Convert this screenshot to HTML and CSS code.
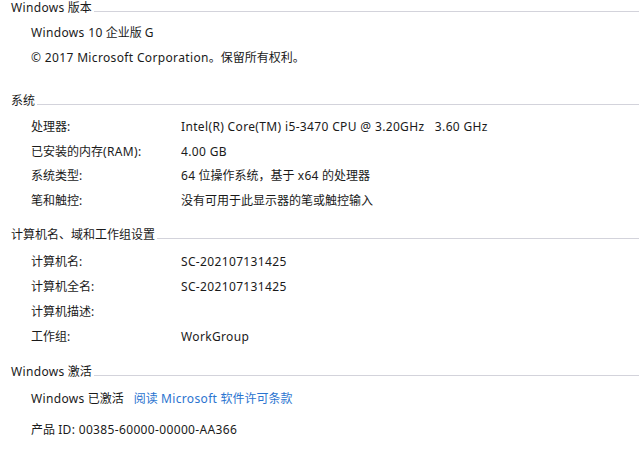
FILE: index.html
```html
<!DOCTYPE html>
<html lang="zh-CN">
<head>
<meta charset="utf-8">
<title>系统</title>
<link rel="stylesheet" href="styles.css">
</head>
<body>
<div class="page">
  <section class="sec sec-1">
    <div class="head"><span class="head-text"><span class="lat">Windows</span> 版本</span><span class="rule"></span></div>
    <div class="rows">
      <div class="row"><span class="full"><span class="lat">Windows 10</span> 企业版 <span class="lat">G</span></span></div>
      <div class="row"><span class="full"><span class="lat">© 2017 Microsoft Corporation</span>。保留所有权利。</span></div>
    </div>
  </section>

  <section class="sec sec-2">
    <div class="head"><span class="head-text">系统</span><span class="rule"></span></div>
    <div class="rows rows-tight">
      <div class="row"><span class="label">处理器:</span><span class="value lat">Intel(R) Core(TM) i5-3470 CPU @ 3.20GHz&nbsp;&nbsp;&nbsp;3.60 GHz</span></div>
      <div class="row"><span class="label">已安装的内存<span class="lat">(RAM):</span></span><span class="value lat">4.00 GB</span></div>
      <div class="row"><span class="label">系统类型:</span><span class="value"><span class="lat">64</span> 位操作系统，基于 <span class="lat">x64</span> 的处理器</span></div>
      <div class="row"><span class="label">笔和触控:</span><span class="value">没有可用于此显示器的笔或触控输入</span></div>
    </div>
  </section>

  <section class="sec sec-3">
    <div class="head"><span class="head-text">计算机名、域和工作组设置</span><span class="rule"></span></div>
    <div class="rows">
      <div class="row"><span class="label">计算机名:</span><span class="value lat">SC-202107131425</span></div>
      <div class="row"><span class="label">计算机全名:</span><span class="value lat">SC-202107131425</span></div>
      <div class="row"><span class="label">计算机描述:</span><span class="value"></span></div>
      <div class="row"><span class="label">工作组:</span><span class="value lat">WorkGroup</span></div>
    </div>
  </section>

  <section class="sec sec-4">
    <div class="head"><span class="head-text"><span class="lat">Windows</span> 激活</span><span class="rule"></span></div>
    <div class="rows">
      <div class="row"><span class="full"><span class="lat">Windows</span> 已激活</span><a class="link" href="#">阅读 <span class="lat">Microsoft</span> 软件许可条款</a></div>
      <div class="row row-gap"><span class="full">产品 <span class="lat">ID: 00385-60000-00000-AA366</span></span></div>
    </div>
  </section>
</div>
</body>
</html>
```

FILE: styles.css
```css
html, body {
  margin: 0;
  padding: 0;
  background: #ffffff;
}

body {
  font-family: "Segoe UI", "Noto Sans", "Noto Sans CJK SC", sans-serif;
  font-size: 12px;
  color: #1a1a1a;
}

.lat {
  letter-spacing: 0.35px;
}

.page {
  padding-left: 11px;
  width: 628px;
}

.head {
  display: flex;
  align-items: flex-start;
  height: 16px;
  line-height: 16px;
}

.head-text {
  white-space: nowrap;
  color: #1a1a1a;
}

.rule {
  flex: 1;
  height: 1px;
  margin-top: 11px;
  margin-left: 2px;
  background: #d3d3db;
}

.rows {
  padding-left: 20px;
  margin-top: 5.5px;
}

.row {
  display: flex;
  height: 25px;
  line-height: 25px;
  white-space: nowrap;
}

.rows-tight .row {
  height: 24.5px;
  line-height: 24.5px;
}

.label {
  width: 150px;
  flex: none;
}

.value {
  flex: none;
}

.link {
  margin-left: 10px;
  color: #2b74d0;
  text-decoration: none;
}

.row-gap {
  margin-top: 6px;
}

.sec-1 .rows { margin-top: 4px; }
.sec-2 { margin-top: 23px; }
.sec-2 .rows { margin-top: 6px; }
.sec-3 { margin-top: 14px; }
.sec-4 { margin-top: 15.5px; }
```
